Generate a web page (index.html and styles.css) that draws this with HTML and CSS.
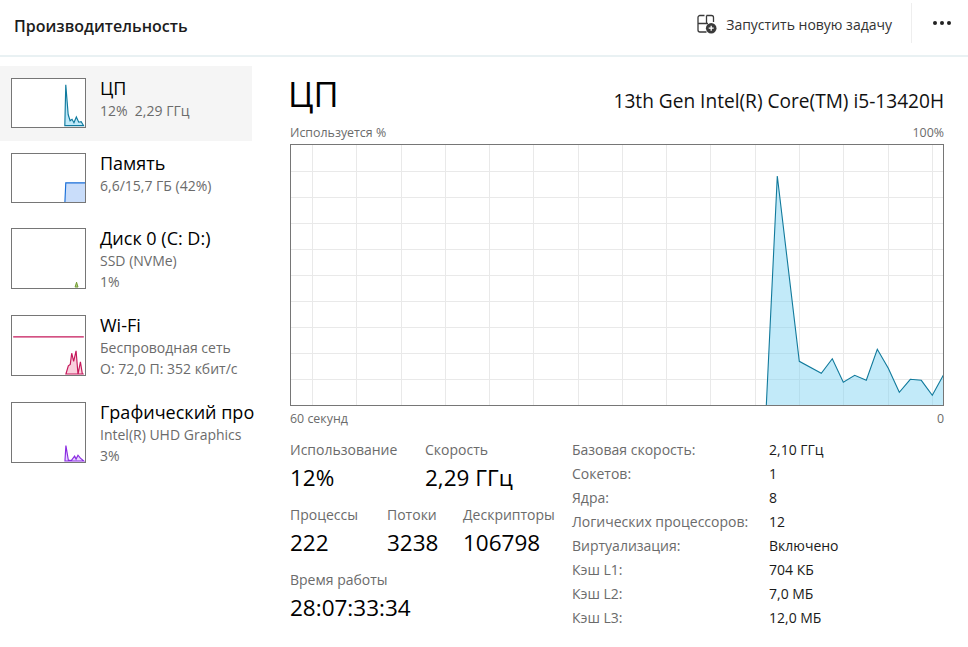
FILE: index.html
```html
<!DOCTYPE html>
<html lang="ru">
<head>
<meta charset="utf-8">
<title>Производительность</title>
<link rel="stylesheet" href="styles.css">
</head>
<body>
<header class="topbar">
  <h1 class="page-title">Производительность</h1>
  <div class="actions">
    <button class="run-task">
      <svg class="run-icon" width="20" height="20" viewBox="0 0 20 20" fill="none" stroke="#3a3a3a" stroke-width="1.3">
        <path d="M7.5 1.5H3A2 2 0 0 0 1 3.5V16a2 2 0 0 0 2 2h6.5M1 9.5h8.5V1.5M9.5 1.5h5A2 2 0 0 1 16.5 3.5V8M9.5 9.5H11"/>
        <circle cx="14.2" cy="14.2" r="5.3" fill="#3a3a3a" stroke="none"/>
        <path d="M14.2 11.7v5M11.7 14.2h5" stroke="#fff" stroke-width="1.3"/>
      </svg>
      <span>Запустить новую задачу</span>
    </button>
    <div class="divider"></div>
    <div class="more" aria-label="Ещё"><i></i><i></i><i></i></div>
  </div>
</header>
<div class="main">
  <nav class="sidebar">
    <div class="item selected">
      <svg class="thumb" width="75" height="50" viewBox="0 0 75 50">
        <path class="cpu" d="M54.5 48.5L55.5 6L58 37L60 43.5L62 42L64 45.5L66.5 39.5L69 45L71.5 44.5L74 48.5Z"/>
      </svg>
      <div class="info"><div class="name">ЦП</div><div class="sub">12%&nbsp; 2,29 ГГц</div></div>
    </div>
    <div class="item">
      <svg class="thumb" width="75" height="50" viewBox="0 0 75 50">
        <path class="mem" d="M54.5 52L55.5 30H77V52Z"/>
      </svg>
      <div class="info"><div class="name">Память</div><div class="sub">6,6/15,7 ГБ (42%)</div></div>
    </div>
    <div class="item">
      <svg class="thumb" width="75" height="61" viewBox="0 0 75 61">
        <path class="disk" d="M65 60L66.5 55L68 60Z"/>
      </svg>
      <div class="info"><div class="name">Диск 0 (C: D:)</div><div class="sub">SSD (NVMe)</div><div class="sub">1%</div></div>
    </div>
    <div class="item">
      <svg class="thumb" width="75" height="61" viewBox="0 0 75 61">
        <path class="wifi-line" d="M1 21.5H74"/>
        <path class="wifi" d="M55.5 60L58 51.5L60 50L61.5 38.5L63.5 47L66 36L68 60L70.5 47.5L72.5 60L74 60Z"/>
      </svg>
      <div class="info"><div class="name">Wi-Fi</div><div class="sub">Беспроводная сеть</div><div class="sub">О: 72,0 П: 352 кбит/с</div></div>
    </div>
    <div class="item">
      <svg class="thumb" width="75" height="61" viewBox="0 0 75 61">
        <path class="gpu" d="M54.5 60L55.5 44L58 59L61 59.5L64.5 55L66 58L68 54L70.5 57L74 60Z"/>
      </svg>
      <div class="info"><div class="name">Графический про</div><div class="sub">Intel(R) UHD Graphics</div><div class="sub">3%</div></div>
    </div>
  </nav>
  <section class="content">
    <div class="heading">
      <div class="big">ЦП</div>
      <div class="model">13th Gen Intel(R) Core(TM) i5-13420H</div>
    </div>
    <div class="axis top"><span>Используется %</span><span>100%</span></div>
    <svg class="chart" width="654" height="263" viewBox="290 144 654 263">
      <path class="grid" d="M312.5 145V405M356.5 145V405M401.5 145V405M445.5 145V405M489.5 145V405M533.5 145V405M578.5 145V405M622.5 145V405M666.5 145V405M710.5 145V405M755.5 145V405M799.5 145V405M843.5 145V405M888.5 145V405M932.5 145V405M291 171.5H943M291 197.5H943M291 223.5H943M291 249.5H943M291 275.5H943M291 301.5H943M291 327.5H943M291 353.5H943M291 379.5H943"/>
      <path class="area" d="M766.3 405.5L777.3 176L799.3 361.3L821.3 373.3L832.3 358.7L843.3 382.3L854.7 375.3L866.3 380.3L877.3 349.3L888.3 368.3L899.3 392.3L910.3 379.3L921.3 380.3L932.3 395.3L943.3 375.3V405.5Z"/>
      <path class="line" d="M766.3 405.5L777.3 176L799.3 361.3L821.3 373.3L832.3 358.7L843.3 382.3L854.7 375.3L866.3 380.3L877.3 349.3L888.3 368.3L899.3 392.3L910.3 379.3L921.3 380.3L932.3 395.3L943.3 375.3"/>
      <rect class="frame" x="290.5" y="144.5" width="653" height="261"/>
    </svg>
    <div class="axis bottom"><span>60 секунд</span><span>0</span></div>
    <div class="details">
      <div class="stats">
        <div class="stat-row">
          <div class="stat s-use"><div class="label">Использование</div><div class="value">12%</div></div>
          <div class="stat"><div class="label">Скорость</div><div class="value">2,29 ГГц</div></div>
        </div>
        <div class="stat-row">
          <div class="stat s-proc"><div class="label">Процессы</div><div class="value">222</div></div>
          <div class="stat s-thr"><div class="label">Потоки</div><div class="value">3238</div></div>
          <div class="stat"><div class="label">Дескрипторы</div><div class="value">106798</div></div>
        </div>
        <div class="stat-row">
          <div class="stat"><div class="label">Время работы</div><div class="value">28:07:33:34</div></div>
        </div>
      </div>
      <dl class="specs">
        <dt>Базовая скорость:</dt><dd>2,10 ГГц</dd>
        <dt>Сокетов:</dt><dd>1</dd>
        <dt>Ядра:</dt><dd>8</dd>
        <dt>Логических процессоров:</dt><dd>12</dd>
        <dt>Виртуализация:</dt><dd>Включено</dd>
        <dt>Кэш L1:</dt><dd>704 КБ</dd>
        <dt>Кэш L2:</dt><dd>7,0 МБ</dd>
        <dt>Кэш L3:</dt><dd>12,0 МБ</dd>
      </dl>
    </div>
  </section>
</div>
</body>
</html>
```
FILE: styles.css
```css
* { box-sizing: border-box; }
html, body { margin: 0; height: 100%; }
body {
  background: #fff;
  color: #000;
  font-family: "Open Sans", "Noto Sans", "Liberation Sans", sans-serif;
  overflow: hidden;
}
.topbar {
  height: 57px;
  display: flex;
  align-items: flex-start;
  justify-content: space-between;
  border-bottom: 2px solid #e9f1f3;
}
.page-title {
  margin: 15px 0 0 14px;
  font-size: 16px;
  line-height: 22px;
  font-weight: 600;
  color: #1c1c1c;
}
.actions { display: flex; align-items: flex-start; }
.run-task {
  display: flex;
  align-items: center;
  gap: 9px;
  margin-top: 14px;
  padding: 0;
  height: 20px;
  border: 0;
  background: none;
  font: inherit;
  font-size: 14px;
  color: #333;
}
.run-icon { flex: none; }
.divider { width: 1px; height: 40px; margin: 3px 0 0 19px; background: #eeeeee; }
.more { display: flex; gap: 3px; margin: 21px 17px 0 21px; }
.more i { display: block; width: 4px; height: 4px; border-radius: 50%; background: #222; }

.main { display: flex; padding-top: 9px; }
.sidebar { flex: none; width: 256px; overflow: hidden; }
.item {
  display: flex;
  width: 252px;
  padding: 12px 0 13px 11px;
  gap: 14px;
}
.item + .item + .item { padding-bottom: 14px; }
.item.selected { background: #f5f5f5; }
.thumb { display: block; flex: none; background: #fff; border: 1px solid #767676; overflow: hidden; }
.info { margin: -2px 0 -6px; white-space: nowrap; }
.name { font-size: 18px; line-height: 24px; color: #000; }
.sub { font-size: 14px; line-height: 21px; color: #6b6b6b; }

.cpu { fill: #c0e9f9; stroke: #0f7a9e; stroke-width: 1.2; }
.mem { fill: #c9ddfa; stroke: #1a6fd8; stroke-width: 1.2; }
.disk { fill: #b4c98a; stroke: #6f9a2e; stroke-width: 1; }
.wifi { fill: #f9d0dd; stroke: #c5175a; stroke-width: 1.2; }
.wifi-line { fill: none; stroke: #c5175a; stroke-width: 1.2; }
.gpu { fill: #e7d5ff; stroke: #8a2be2; stroke-width: 1.2; }

.content { flex: none; width: 654px; margin-left: 34px; }
.heading {
  display: flex;
  justify-content: space-between;
  align-items: flex-end;
  height: 52px;
  margin-top: 1px;
}
.big { font-size: 34.5px; line-height: 50px; margin-left: -2px; }
.model { font-size: 19.1px; line-height: 26px; margin-bottom: 5px; color: #111; }
.axis {
  display: flex;
  justify-content: space-between;
  font-size: 12.4px;
  line-height: 16px;
  color: #6b6b6b;
}
.axis.top { margin-top: 6px; }
.axis.bottom { margin-top: 4px; }
.chart { display: block; margin-top: 3px; }
.grid { fill: none; stroke: #e9e9e9; stroke-width: 1; }
.area { fill: #7fd3f2; fill-opacity: .48; stroke: none; }
.line { fill: none; stroke: #117a9c; stroke-width: 1.1; }
.frame { fill: none; stroke: #767676; stroke-width: 1; }

.details { display: flex; margin-top: 13px; }
.stats { flex: none; width: 282px; }
.stat-row { display: flex; height: 65px; }
.s-use { width: 135px; }
.s-proc { width: 97px; }
.s-thr { width: 76px; }
.label { font-size: 14px; line-height: 20px; color: #6b6b6b; white-space: nowrap; }
.value { font-size: 22.5px; line-height: 34px; margin-top: 1px; color: #000; white-space: nowrap; }
.specs {
  display: grid;
  grid-template-columns: 197px auto;
  grid-auto-rows: 24px;
  margin: 0;
  font-size: 14px;
  line-height: 20px;
}
.specs dt { color: #6b6b6b; }
.specs dd { margin: 0; color: #1a1a1a; }
```
